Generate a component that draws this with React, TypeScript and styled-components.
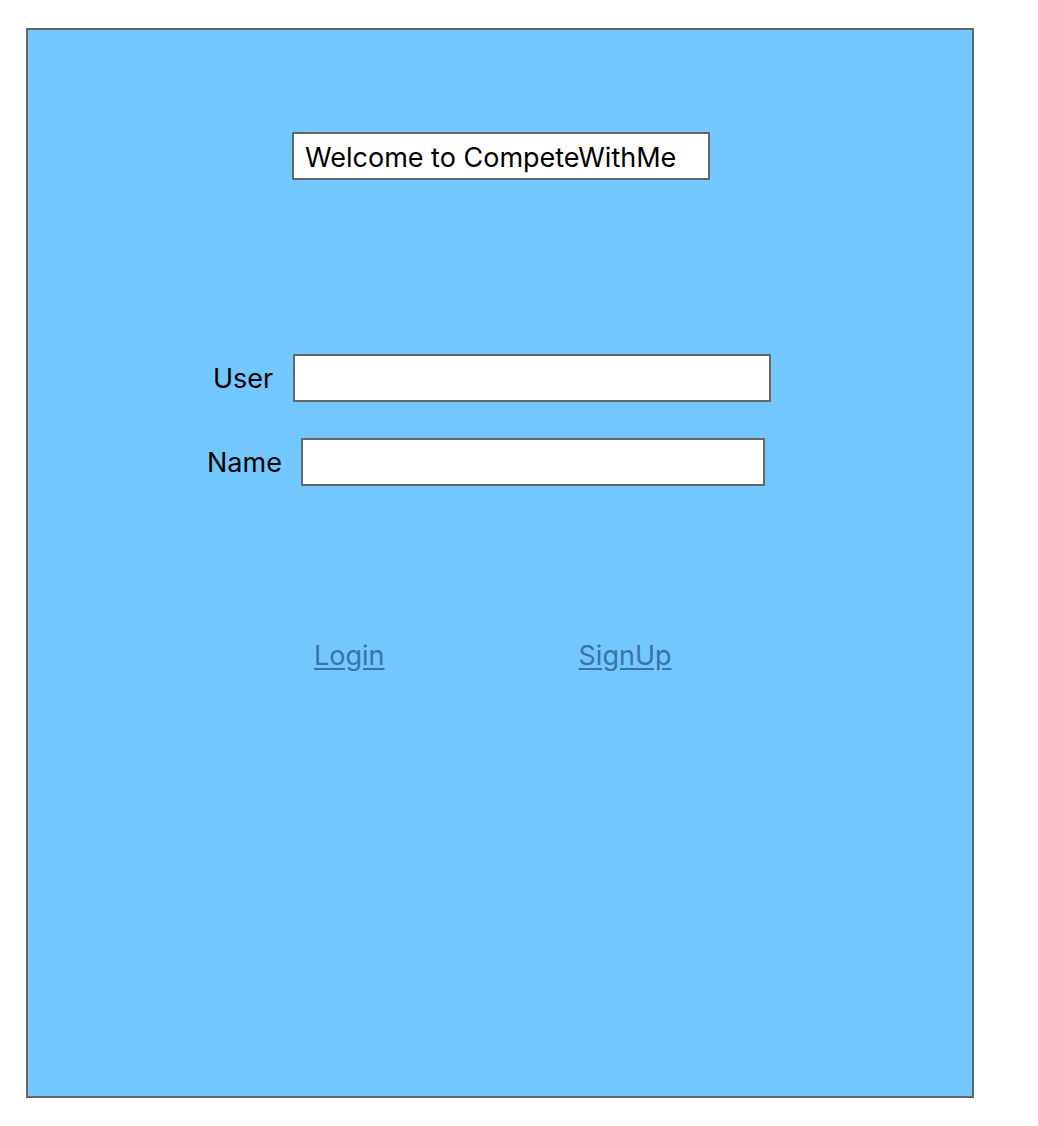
import React from 'react';
import styled, { createGlobalStyle } from 'styled-components';

const GlobalStyle = createGlobalStyle`
  body {
    margin: 0;
    background: #ffffff;
    font-family: Inter, "Liberation Sans", Arial, sans-serif;
  }
`;

const Page = styled.div`
  padding: 28px 0 0 26px;
`;

const Panel = styled.div`
  box-sizing: border-box;
  width: 948px;
  height: 1070px;
  background: #72c8fe;
  border: 2px solid #666666;
  display: flex;
  flex-direction: column;
  align-items: center;
`;

const TitleBox = styled.div`
  box-sizing: border-box;
  margin: 102px 0 0 2px;
  width: 418px;
  height: 48px;
  background: #ffffff;
  border: 2px solid #666666;
  padding: 2px 0 0 11px;
  display: flex;
  align-items: center;
  font-size: 27px;
  color: #000000;
`;

const Form = styled.div`
  margin-top: 174px;
  display: flex;
  flex-direction: column;
  gap: 36px;
  align-self: stretch;
`;

const Row = styled.div<{ $indent: number; $gap: number }>`
  display: flex;
  align-items: center;
  padding-left: ${p => p.$indent}px;
  gap: ${p => p.$gap}px;
`;

const Label = styled.label`
  font-size: 27px;
  color: #000000;
`;

const Input = styled.input<{ $width: number }>`
  box-sizing: border-box;
  width: ${p => p.$width}px;
  height: 48px;
  background: #ffffff;
  border: 2px solid #666666;
  outline: none;
  font-size: 20px;
  font-family: inherit;
  padding: 0 10px;
`;

const Links = styled.div`
  margin-top: 153px;
  display: flex;
  gap: 194px;
  align-self: stretch;
  padding-left: 286px;
`;

const Link = styled.a`
  font-size: 27px;
  color: #3b72a8;
  text-decoration: underline;
  text-underline-offset: 3px;
  cursor: pointer;
`;

export default function App() {
  return (
    <>
      <GlobalStyle />
      <Page>
        <Panel>
          <TitleBox>Welcome to CompeteWithMe</TitleBox>
          <Form>
            <Row $indent={185} $gap={20}>
              <Label>User</Label>
              <Input $width={478} />
            </Row>
            <Row $indent={179} $gap={19}>
              <Label>Name</Label>
              <Input $width={464} />
            </Row>
          </Form>
          <Links>
            <Link href="#">Login</Link>
            <Link href="#">SignUp</Link>
          </Links>
        </Panel>
      </Page>
    </>
  );
}
